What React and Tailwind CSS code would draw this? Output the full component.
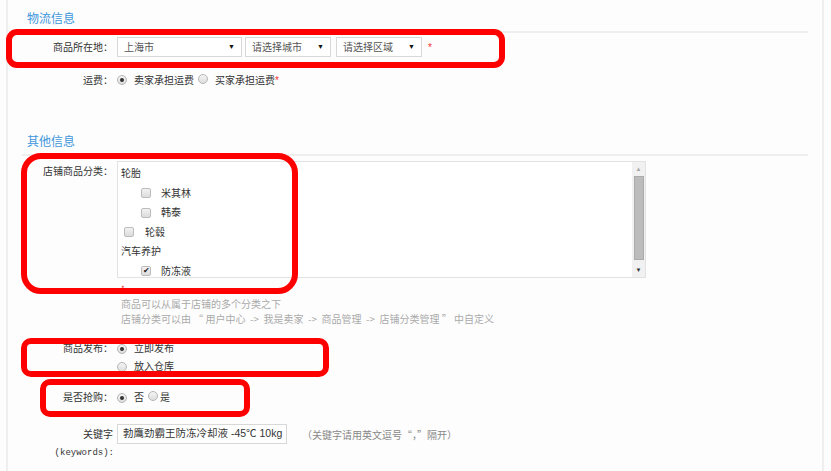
import React from 'react';

const Radio = ({ checked }) => (
  <span className="inline-flex items-center justify-center w-[10px] h-[10px] rounded-full border border-[#b5b5b5] bg-gradient-to-b from-[#f4f4f4] to-[#dedede] shrink-0">
    {checked && <span className="w-[4px] h-[4px] rounded-full bg-[#333]" />}
  </span>
);

const Check = ({ checked }) => (
  <span className="inline-flex items-center justify-center w-[10px] h-[10px] rounded-[2px] border border-[#bcbcbc] bg-gradient-to-b from-[#f2f2f2] to-[#dcdcdc] shrink-0 text-[8px] leading-none text-[#222]">
    {checked ? '✔' : ''}
  </span>
);

const Select = ({ label, width, className = '' }) => (
  <div className={`h-[20px] border border-[#d8d8d8] bg-white flex items-center justify-between pl-[6px] pr-[6px] text-[#555] ${width} ${className}`}>
    <span>{label}</span>
    <span className="text-[7px] text-[#111]">▼</span>
  </div>
);

const Header = ({ title, className = '' }) => (
  <div className={`border-b-2 border-[#eeeeee] pb-[4px] pl-[5px] mr-[14px] ${className}`}>
    <div className="text-[12px] leading-[16px] text-[#3d97dc]">{title}</div>
  </div>
);

const Label = ({ children, className = '' }) => (
  <div className={`w-[95px] shrink-0 text-right pr-[4px] text-[#333] ${className}`}>{children}</div>
);

export default function App() {
  return (
    <div className="relative w-[831px] h-[471px] overflow-hidden bg-[#fdfdfd] text-[10px] text-[#333] font-['Liberation_Sans','Noto_Sans_CJK_SC',sans-serif]">
      <div className="ml-[6px] w-[818px] h-full border-l-2 border-r-2 border-[#efefef] pl-[14px]">
        <Header title="物流信息" className="pt-[11px]" />

        <div className="mt-[4px] flex items-center h-[20px]">
          <Label>商品所在地：</Label>
          <Select label="上海市" width="w-[125px]" />
          <Select label="请选择城市" width="w-[86px]" className="ml-[3px]" />
          <Select label="请选择区域" width="w-[86px]" className="ml-[5px]" />
          <span className="ml-[6px] text-[#e33] text-[10px]">*</span>
        </div>

        <div className="mt-[15px] flex items-center h-[16px]">
          <Label>运费：</Label>
          <Radio checked />
          <span className="ml-[7px]">卖家承担运费</span>
          <span className="ml-[4px]"><Radio /></span>
          <span className="ml-[7px]">买家承担运费</span>
          <span className="text-[#e33]">*</span>
        </div>

        <Header title="其他信息" className="mt-[46px]" />

        <div className="mt-[5px] flex">
          <Label className="pt-[3px] leading-[16px]">店铺商品分类：</Label>
          <div className="w-[529px] h-[117px] border border-[#e2e2e2] bg-white flex">
            <div className="flex-1 pt-[2px] pl-[3px] leading-[19.5px]">
              <div>轮胎</div>
              <div className="flex items-center pl-[20px]"><Check /><span className="ml-[10px]">米其林</span></div>
              <div className="flex items-center pl-[20px]"><Check /><span className="ml-[10px]">韩泰</span></div>
              <div className="flex items-center pl-[3px]"><Check /><span className="ml-[11px]">轮毂</span></div>
              <div>汽车养护</div>
              <div className="flex items-center pl-[20px]"><Check checked /><span className="ml-[10px]">防冻液</span></div>
            </div>
            <div className="w-[13px] bg-[#f1f1f1] flex flex-col items-center">
              <span className="h-[14px] text-[6px] leading-[14px] text-[#a8a8a8]">▲</span>
              <div className="w-[10px] h-[84px] bg-[#bcbcbc] border border-[#ababab]" />
              <div className="flex-1" />
              <span className="h-[14px] text-[6px] leading-[14px] text-[#333]">▼</span>
            </div>
          </div>
        </div>

        <div className="ml-[99px] leading-[15px] font-['Noto_Sans_CJK_SC',sans-serif]">
          <div className="mt-[3px] text-[#e33] text-[8px]">*</div>
          <div className="text-[#aaa]">商品可以从属于店铺的多个分类之下</div>
          <div className="text-[#aaa] whitespace-pre">店铺分类可以由 “ 用户中心  -&gt;  我是卖家  -&gt;  商品管理  -&gt;  店铺分类管理 ” 中自定义</div>
        </div>

        <div className="mt-[14px] flex leading-[18px]">
          <Label>商品发布：</Label>
          <div>
            <div className="flex items-center"><Radio checked /><span className="ml-[7px]">立即发布</span></div>
            <div className="flex items-center"><Radio /><span className="ml-[7px]">放入仓库</span></div>
          </div>
        </div>

        <div className="mt-[13px] flex items-center leading-[18px]">
          <Label>是否抢购：</Label>
          <Radio checked />
          <span className="ml-[7px]">否</span>
          <span className="ml-[4px]"><Radio /></span>
          <span className="ml-[2px]">是</span>
        </div>

        <div className="mt-[17px] flex items-center">
          <Label>关键字</Label>
          <div className="w-[170px] h-[20px] border border-[#d8d8d8] bg-white flex items-center pl-[5px] text-[#333] text-[10.5px]">
            勃鹰劲霸王防冻冷却液 -45℃ 10kg
          </div>
          <span className="ml-[15px] text-[#888] font-['Noto_Sans_CJK_SC',sans-serif] whitespace-pre">（关键字请用英文逗号“，”隔开）</span>
        </div>
        <div className="mt-[2px] w-[95px] text-right pr-[3px] font-['Liberation_Mono',monospace] text-[9px] leading-[14px] text-[#333]">
          (keywords):
        </div>
      </div>

      <div className="absolute left-[6px] top-[29px] w-[499px] h-[39px] border-[6px] border-[#ff0000] rounded-[11px]" />
      <div className="absolute left-[21px] top-[153px] w-[277px] h-[141px] border-[6px] border-[#ff0000] rounded-[20px]" />
      <div className="absolute left-[21px] top-[338px] w-[308px] h-[39px] border-[6px] border-[#ff0000] rounded-[10px]" />
      <div className="absolute left-[40px] top-[379px] w-[210px] h-[38px] border-[6px] border-[#ff0000] rounded-[10px]" />
    </div>
  );
}
